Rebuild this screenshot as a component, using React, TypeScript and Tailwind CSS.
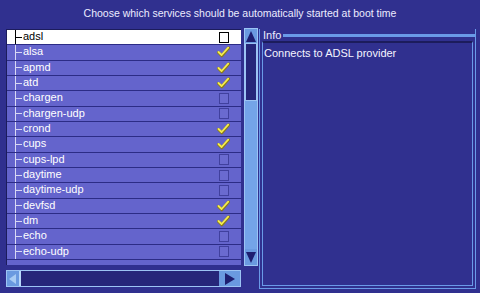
import React from "react";

const services: { name: string; on: boolean }[] = [
  { name: "adsl", on: false },
  { name: "alsa", on: true },
  { name: "apmd", on: true },
  { name: "atd", on: true },
  { name: "chargen", on: false },
  { name: "chargen-udp", on: false },
  { name: "crond", on: true },
  { name: "cups", on: true },
  { name: "cups-lpd", on: false },
  { name: "daytime", on: false },
  { name: "daytime-udp", on: false },
  { name: "devfsd", on: true },
  { name: "dm", on: true },
  { name: "echo", on: false },
  { name: "echo-udp", on: false },
];

function Check() {
  return (
    <svg width="13" height="12" viewBox="0 0 13 12">
      <path d="M1.5 6.5 L4.8 9.8 L11.5 2" fill="none" stroke="#8a7a18" strokeWidth="3" strokeLinecap="round" strokeLinejoin="round" />
      <path d="M1.5 6 L4.6 9 L11.2 1.6" fill="none" stroke="#f4ec50" strokeWidth="1.8" strokeLinecap="round" strokeLinejoin="round" />
    </svg>
  );
}

function Row({ name, on, selected }: { name: string; on: boolean; selected: boolean }) {
  return (
    <div
      className={
        "h-[15.33px] shrink-0 flex items-stretch border-b border-[#2c2c86] " +
        (selected ? "bg-white text-black" : "text-white")
      }
    >
      <div className="w-[8px] shrink-0" />
      <div className={"w-[8px] shrink-0 flex items-center border-l " + (selected ? "border-black" : "border-[#d8d8f4]")}>
        <div className={"w-[6px] h-[1px] " + (selected ? "bg-black" : "bg-[#d8d8f4]")} />
      </div>
      <div className="flex-1 flex items-center text-[11px] leading-none pb-[1px]">{name}</div>
      <div className="w-[24px] shrink-0 flex items-center justify-start">
        {on ? (
          <Check />
        ) : (
          <div
            className={
              "w-[10px] h-[11px] ml-[2px] border " +
              (selected ? "border-black bg-white" : "border-[#40409e] bg-[#6a6ad0]")
            }
          />
        )}
      </div>
    </div>
  );
}

export default function App() {
  return (
    <div className="w-[480px] h-[293px] overflow-hidden bg-[#30308f] text-white font-['Liberation_Sans',Arial,sans-serif]">
      <div className="h-[29px] flex items-center justify-center text-[10.5px] text-[#ececff] pb-[1px]">
        Choose which services should be automatically started at boot time
      </div>

      <div className="flex pl-[6px]">
        {/* list + horizontal scrollbar */}
        <div className="w-[235px] flex flex-col shrink-0">
          <div className="h-[236px] overflow-hidden flex flex-col bg-[#6464cc] border-t border-l border-[#1c1c5c]">
            {services.map((s, i) => (
              <Row key={s.name} name={s.name} on={s.on} selected={i === 0} />
            ))}
          </div>
          <div className="mt-[5px] h-[17px] flex bg-[#6a9ae0] border border-[#9cc4f4]">
            <div className="w-[12px] flex items-center justify-center">
              <svg width="8" height="10" viewBox="0 0 8 10">
                <path d="M7 0 L0 5 L7 10 Z" fill="#a8ccf4" />
              </svg>
            </div>
            <div className="flex-1 bg-[#26267a] border-l-2 border-[#b8d8fa]" />
            <div className="w-[21px] flex items-center justify-center bg-[#6a9ae0]">
              <svg width="10" height="12" viewBox="0 0 10 12">
                <path d="M0 0 L10 6 L0 12 Z" fill="#1e1e70" />
              </svg>
            </div>
          </div>
        </div>

        {/* vertical scrollbar */}
        <div className="ml-[3px] w-[14px] h-[238px] -mt-[1px] flex flex-col bg-[#6a9ae0] border border-[#9cc4f4]">
          <div className="h-[14px] flex items-center justify-center">
            <svg width="10" height="11" viewBox="0 0 10 11">
              <path d="M5 0 L10 11 L0 11 Z" fill="#1e1e70" />
            </svg>
          </div>
          <div className="h-[58px] bg-[#26267a] border border-[#9cc4f4]" />
          <div className="flex-1 bg-[#74a4e8]" />
          <div className="h-[16px] flex items-center justify-center">
            <svg width="10" height="11" viewBox="0 0 10 11">
              <path d="M0 0 L10 0 L5 11 Z" fill="#1e1e70" />
            </svg>
          </div>
        </div>

        {/* info frame */}
        <div className="ml-[1px] w-[217px] h-[260px] flex flex-col border-l border-r border-b border-[#6a9ae8]">
          <div className="h-[12px] flex items-center">
            <span className="pl-[3px] pr-[2px] text-[11px] leading-none text-[#ececff]">Info</span>
            <div className="flex-1 h-[3px] border-t-2 border-b border-[#6a9ae8] mt-[1px]" />
          </div>
          <div className="flex-1 mx-[2px] mb-[2px] border border-[#6a9ae8] border-t-[#1c1c5c] border-t-2 px-[1px] pt-[2px] text-[11px] text-[#f4f4ff]">
            Connects to ADSL provider
          </div>
        </div>
      </div>
    </div>
  );
}
